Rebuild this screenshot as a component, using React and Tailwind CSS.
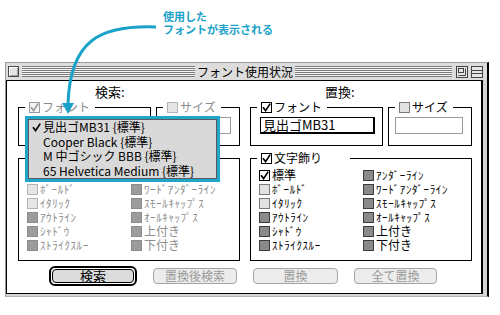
import React from "react";

const Check = ({ color = "#000" }) => (
  <svg width="9" height="9" viewBox="0 0 9 9" className="block">
    <path d="M1 4.2 L3.6 7.6 L8.2 0.6" fill="none" stroke={color} strokeWidth="1.7" />
  </svg>
);

function Box({ kind }) {
  if (kind === "checked")
    return (
      <span className="w-[11px] h-[11px] shrink-0 border border-black bg-white flex items-center justify-center">
        <Check />
      </span>
    );
  if (kind === "dimChecked")
    return (
      <span className="w-[11px] h-[11px] shrink-0 border border-[#9a9a9a] bg-[#f4f4f4] flex items-center justify-center">
        <Check color="#9a9a9a" />
      </span>
    );
  if (kind === "light")
    return <span className="w-[11px] h-[11px] shrink-0 border border-[#7a7a7a] bg-[#e2e2e2]" />;
  if (kind === "dimLight")
    return <span className="w-[11px] h-[11px] shrink-0 border border-[#b4b4b4] bg-[#e6e6e6]" />;
  if (kind === "dark")
    return <span className="w-[11px] h-[11px] shrink-0 border border-[#3c3c3c] bg-[#8a8a8a]" />;
  return <span className="w-[11px] h-[11px] shrink-0 border border-[#8c8c8c] bg-[#9c9c9c]" />;
}

function Group({ label, box, dim, hidden, className = "", legendPr = "pr-[5px]", children }) {
  return (
    <fieldset className={`border border-black min-w-0 ${className}`}>
      <legend className={`ml-[6px] pl-[4px] ${legendPr} h-[12px] flex items-center gap-[2px] ${hidden ? "invisible" : ""}`}>
        <Box kind={box} />
        <span className={`text-[12px] leading-[12px] ${dim ? "text-[#8c8c8c]" : "text-black"}`}>{label}</span>
      </legend>
      {children}
    </fieldset>
  );
}

const col1 = [
  ["標準", false],
  ["ﾎﾞｰﾙﾄﾞ", true],
  ["ｲﾀﾘｯｸ", true],
  ["ｱｳﾄﾗｲﾝ", true],
  ["ｼｬﾄﾞｳ", true],
  ["ｽﾄﾗｲｸｽﾙｰ", true],
];
const col2 = [
  ["ｱﾝﾀﾞｰﾗｲﾝ", true],
  ["ﾜｰﾄﾞｱﾝﾀﾞｰﾗｲﾝ", true],
  ["ｽﾓｰﾙｷｬｯﾌﾟｽ", true],
  ["ｵｰﾙｷｬｯﾌﾟｽ", true],
  ["上付き", false],
  ["下付き", false],
];

function StyleRow({ label, half, kind, dim, hidden }) {
  return (
    <div className={`h-[14px] flex items-center gap-[2px] ${hidden ? "invisible" : ""}`}>
      <Box kind={kind} />
      <span
        className={`${half ? "text-[11px] tracking-[0.6px]" : "text-[12px]"} leading-[14px] whitespace-nowrap ${
          dim ? "text-[#8c8c8c]" : "text-black"
        }`}
      >
        {label}
      </span>
    </div>
  );
}

function Column({ side }) {
  const dim = side === "left";
  const kinds1 = dim
    ? ["dimChecked", "dimLight", "dimLight", "dimDark", "dimDark", "dimDark"]
    : ["checked", "light", "light", "dark", "dark", "dark"];
  const kind2 = dim ? "dimDark" : "dark";
  return (
    <div className="w-[222px] flex flex-col">
      <div className="flex gap-[5px]">
        <Group label="フォント" box={dim ? "dimChecked" : "checked"} dim={dim} className="w-[133px]">
          <div className="pl-[9px] pt-[4px] pb-[11px]">
            <div className="w-[115px] h-[17px] border border-black border-r-2 border-b-2 bg-white text-[13px] leading-[14px] pl-[2px] whitespace-nowrap">
              {dim ? "" : "見出ゴMB31"}
            </div>
          </div>
        </Group>
        <Group label="サイズ" box={dim ? "dimLight" : "light"} dim={dim} className="flex-1">
          <div className="pl-[6px] pt-[4px] pb-[11px]">
            <div className="w-[68px] h-[17px] border border-[#9a9a9a] bg-white" />
          </div>
        </Group>
      </div>
      <Group
        label="文字飾り"
        box={dim ? "dimChecked" : "checked"}
        dim={dim}
        hidden={dim}
        legendPr="pr-[28px]"
        className="mt-[6px]"
      >
        <div className="flex pl-[8px] pt-[4px] pb-[8px]">
          <div className="w-[104px] flex flex-col">
            {col1.map(([l, h], i) => (
              <StyleRow key={l} label={l} half={h} kind={kinds1[i]} dim={dim} hidden={dim && i === 0} />
            ))}
          </div>
          <div className="flex flex-col">
            {col2.map(([l, h], i) => (
              <StyleRow key={l} label={l} half={h} kind={kind2} dim={dim} hidden={dim && i === 0} />
            ))}
          </div>
        </div>
      </Group>
    </div>
  );
}

const stripes =
  "h-[11px] bg-[repeating-linear-gradient(to_bottom,#7c7c7c_0px,#7c7c7c_1px,#f4f4f4_1px,#f4f4f4_2px)]";

function DisabledButton({ label, w }) {
  return (
    <div
      className={`${w} h-[16px] border border-[#a4a4a4] rounded-[4px] bg-[#ececec] flex items-center justify-center text-[12px] leading-[14px] text-[#9a9a9a]`}
    >
      {label}
    </div>
  );
}

function MenuRow({ checked, children }) {
  return (
    <div className="h-[14.5px] flex items-center">
      <span className="w-[14px] flex justify-center">{checked ? <Check /> : null}</span>
      <span className="text-[12px] leading-[14px] whitespace-nowrap text-black">{children}</span>
    </div>
  );
}

export default function App() {
  return (
    <div className="relative w-[500px] h-[315px] bg-white overflow-hidden font-['Noto_Sans_CJK_JP',sans-serif]">
      {/* annotation */}
      <div className="pl-[163px] pt-[10px] text-[11px] leading-[13px] font-bold text-[#1aa2c8]">
        <div>使用した</div>
        <div>フォントが表示される</div>
      </div>

      {/* window */}
      <div className="mt-[26px] ml-[5px] w-[484px] h-[235px] flex flex-col bg-[#d4d4d4] border-l border-t border-[#9c9c9c] border-r-2 border-r-black border-b border-b-[#b4b4b4]">
        {/* title bar */}
        <div className="h-[17px] bg-[#dddddd] flex items-center">
          <span className="ml-[2px] w-[11px] h-[11px] border border-[#4a4a4a] bg-[#e4e4e4] shadow-[inset_1px_1px_0_#ffffff,inset_-1px_-1px_0_#9a9a9a]" />
          <div className={`ml-[3px] w-[173px] ${stripes}`} />
          <div className="w-[100px] text-center text-[12px] leading-[17px] text-black">フォント使用状況</div>
          <div className={`flex-1 ${stripes}`} />
          <svg width="12" height="12" viewBox="0 0 12 12" className="ml-[4px] block">
            <rect x="0.5" y="0.5" width="11" height="11" fill="#e6e6e6" stroke="#444" />
            <rect x="2.5" y="2.5" width="5" height="4" fill="none" stroke="#444" />
            <path d="M2.5 9.5 H9.5 V2.5" fill="none" stroke="#444" />
          </svg>
          <svg width="12" height="12" viewBox="0 0 12 12" className="ml-[3px] mr-[4px] block">
            <rect x="0.5" y="0.5" width="11" height="11" fill="#e6e6e6" stroke="#444" />
            <path d="M1 4.5 H11 M1 7.5 H11" stroke="#444" />
          </svg>
        </div>

        {/* content */}
        <div className="flex-1 bg-white border border-black border-r-2 mr-[4px] mb-[2px] pt-[3px] pl-[11px] pb-[4px] flex flex-col">
          <div className="flex gap-[10px] h-[16px] mb-[1px] text-[13px] leading-[16px] text-black">
            <div className="w-[222px] pl-[77px]">検索:</div>
            <div className="w-[222px] pl-[75px]">置換:</div>
          </div>
          <div className="flex gap-[10px]">
            <Column side="left" />
            <Column side="right" />
          </div>
          <div className="mt-[5px] ml-[31px] flex items-center gap-[16px]">
            <div className="w-[88px] h-[20px] border-2 border-black rounded-[6px] p-[1px] flex">
              <div className="flex-1 border border-black rounded-[4px] bg-[#dcdcdc] flex items-center justify-center text-[13px] leading-[14px] text-black">
                検索
              </div>
            </div>
            <DisabledButton label="置換後検索" w="w-[84px]" />
            <DisabledButton label="置換" w="w-[85px]" />
            <DisabledButton label="全て置換" w="w-[83px]" />
          </div>
        </div>
      </div>

      {/* arrow */}
      <svg className="absolute left-0 top-0 pointer-events-none" width="500" height="315" viewBox="0 0 500 315">
        <path d="M156 27 C100 25, 70 40, 68 104" fill="none" stroke="#1aa2c8" strokeWidth="3" />
        <polygon points="62,103 74,103 68,114" fill="#1aa2c8" />
      </svg>

      {/* popup menu */}
      <div className="absolute left-[25px] top-[116px] w-[195px] h-[66px] border-[3px] border-[#1ea7ca]">
        <div className="w-full h-full border border-[#5a5a5a] bg-[#d9d9d9] flex flex-col">
          <MenuRow checked>見出ゴMB31 {"{標準}"}</MenuRow>
          <MenuRow>Cooper Black {"{標準}"}</MenuRow>
          <MenuRow>M 中ゴシック BBB {"{標準}"}</MenuRow>
          <MenuRow>65 Helvetica Medium {"{標準}"}</MenuRow>
        </div>
      </div>
    </div>
  );
}
